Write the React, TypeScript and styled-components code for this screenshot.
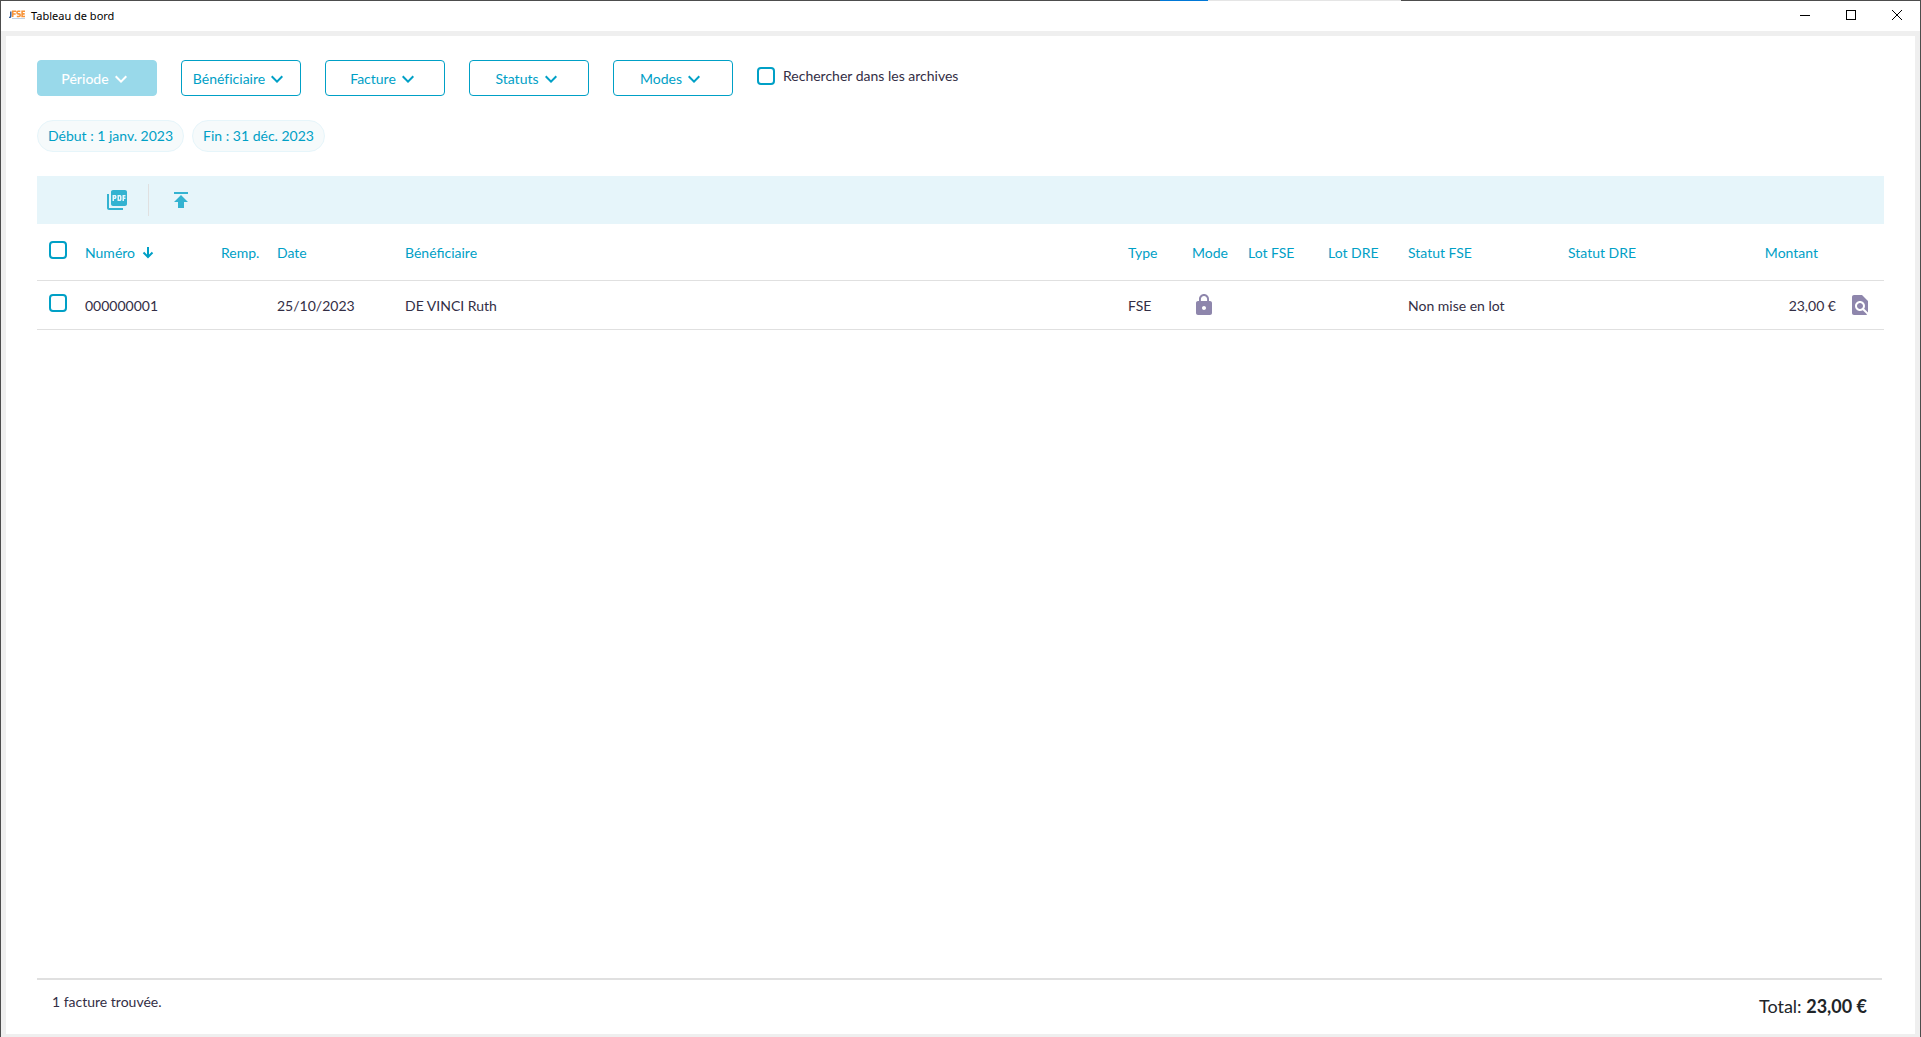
import React from "react";
import styled, { createGlobalStyle } from "styled-components";
import { MdFindInPage, MdKeyboardArrowDown, MdLock, MdPictureAsPdf, MdPublish } from "react-icons/md";

const color = {
  primary: "#00a0c6",
  primaryLight: "#99d9ea",
  icon: "#33b3d1",
  toolbar: "#e6f5fa",
  chip: "#f6fafb",
  text: "#332e45",
  purple: "#8e86ac",
  line: "#e0e0e0",
  frame: "#efefef",
  border: "#4d4d4d",
};

const GlobalStyle = createGlobalStyle`
  *, *::before, *::after { box-sizing: border-box; }
  body {
    margin: 0;
    background: #fff;
    color: ${color.text};
    font: 14px/20px Lato, "Liberation Sans", sans-serif;
  }
  button, input { font: inherit; margin: 0; }
`;

const Window = styled.div`
  display: flex;
  flex-direction: column;
  min-height: 100vh;
`;

const TopEdge = styled.div`
  display: flex;
  height: 1px;
`;

const EdgePart = styled.div<{ $share: number; $color: string }>`
  flex: ${(p) => p.$share};
  background: ${(p) => p.$color};
`;

const Shell = styled.div`
  flex: 1;
  display: flex;
  flex-direction: column;
  border: solid ${color.border};
  border-width: 0 1px;
`;

const TitleBar = styled.header`
  display: flex;
  align-items: center;
  height: 30px;
  padding: 0 0 2px 8px;
  background: #fff;
  color: #000;
`;

const Title = styled.h1`
  flex: 1;
  margin: 0 0 0 6px;
  padding-top: 2px;
  font: 400 11px/16px "Noto Sans", "Open Sans", sans-serif;
`;

const WindowButton = styled.button`
  display: flex;
  align-items: center;
  justify-content: center;
  width: 46px;
  height: 28px;
  padding: 0;
  border: 0;
  background: none;
  color: #000;
`;

const Frame = styled.div`
  flex: 1;
  display: flex;
  padding: 5px 5px 3px;
  background: ${color.frame};
`;

const Page = styled.main`
  flex: 1;
  display: flex;
  flex-direction: column;
  padding: 24px 31px 0;
  background: #fff;
`;

const Filters = styled.div`
  display: flex;
  gap: 24px;
`;

const FilterButton = styled.button<{ $active?: boolean }>`
  display: flex;
  align-items: center;
  justify-content: center;
  width: 120px;
  height: 36px;
  padding: 2px 0 0;
  border: 1px solid ${(p) => (p.$active ? color.primaryLight : color.primary)};
  border-radius: 4px;
  background: ${(p) => (p.$active ? color.primaryLight : "#fff")};
  color: ${(p) => (p.$active ? "#fff" : color.primary)};
  font-weight: ${(p) => (p.$active ? 500 : 400)};
  font-variant-ligatures: none;
`;

const ArchiveLabel = styled.label`
  display: flex;
  align-items: center;
  gap: 8px;
  height: 32px;
`;

const CheckBox = styled.input.attrs({ type: "checkbox" })`
  appearance: none;
  display: block;
  width: 18px;
  height: 18px;
  border: 2px solid ${color.primary};
  border-radius: 4px;
  background: #fff;
  &:checked { background: ${color.primary}; }
`;

const Chips = styled.div`
  display: flex;
  gap: 8px;
  margin: 24px 0;
`;

const Chip = styled.span`
  height: 32px;
  padding: 5px 10px;
  border: 1px solid ${color.toolbar};
  border-radius: 16px;
  background: ${color.chip};
  color: ${color.primary};
`;

const Toolbar = styled.div`
  display: flex;
  align-items: center;
  height: 48px;
  padding-left: 48px;
  background: ${color.toolbar};
`;

const ToolButton = styled.button`
  display: flex;
  align-items: center;
  justify-content: center;
  width: 64px;
  height: 32px;
  padding: 0;
  border: 0;
  background: none;
  color: ${color.icon};
  &:not(:last-child) { border-right: 1px solid ${color.line}; }
`;

const Table = styled.table`
  width: 100%;
  border-collapse: separate;
  border-spacing: 0;
  table-layout: fixed;
`;

const Col = styled.col<{ $width?: number }>`
  width: ${(p) => (p.$width ? `${p.$width}px` : "auto")};
`;

const HeadCell = styled.th<{ $right?: boolean }>`
  height: 57px;
  padding: 1px ${(p) => (p.$right ? 18 : 0)}px 0 0;
  border-bottom: 1px solid ${color.line};
  color: ${color.primary};
  font-weight: 400;
  text-align: ${(p) => (p.$right ? "right" : "left")};
  white-space: nowrap;
`;

const Cell = styled.td<{ $right?: boolean }>`
  height: 49px;
  padding: 1px 0 0;
  border-bottom: 1px solid ${color.line};
  text-align: ${(p) => (p.$right ? "right" : "left")};
  white-space: nowrap;
`;

const CheckSlot = styled.div`
  padding: 0 0 5px 12px;
`;

const SortLabel = styled.span`
  display: flex;
  align-items: center;
  gap: 7px;
`;

const IconSlot = styled.span`
  display: block;
  height: 24px;
  margin-bottom: 1px;
  color: ${color.purple};
`;

const IconButton = styled.button`
  display: block;
  width: 24px;
  height: 24px;
  margin: 0 12px 1px;
  padding: 0;
  border: 0;
  background: none;
  color: ${color.purple};
`;

const Footer = styled.footer`
  display: flex;
  justify-content: space-between;
  height: 56px;
  margin: auto 2px 0 0;
  padding: 12px 15px 0;
  border-top: 2px solid ${color.line};
`;

const Total = styled.span`
  padding-top: 2px;
  color: #212529;
  font-size: 18px;
  line-height: 24px;
`;

const Logo = () => (
  <svg width="16" height="10" viewBox="0 0 16 10" aria-hidden="true">
    <path d="M1.800 1.500v4.500c0 1-.6 1.500-1.700 1.400" fill="none" stroke="#2b5797" strokeWidth="1.400" />
    <path d="M3.700 7V1.200h3.500M3.700 4h3M11.300 1.300H9.100Q8 1.300 8 2.500T9.100 3.900h.9q1.200 0 1.200 1.300T10 6.500H7.800M16 1.200h-2.900v5.300H16M13 3.900h2.700" fill="none" stroke="#f7943a" strokeWidth="1.600" />
    <path d="M3 8.500h13" stroke="#c3d3e6" strokeWidth="1" />
  </svg>
);

const SortArrow = () => (
  <svg width="12" height="12" viewBox="0 0 12 12" fill="none" stroke="currentColor" strokeWidth="2" aria-hidden="true">
    <path d="M6 0v10M1.500 5.500 6 10l4.500-4.500" />
  </svg>
);

const filters = ["Période", "Bénéficiaire", "Facture", "Statuts", "Modes"];
const widths = [48, 136, 56, 128, undefined, 64, 56, 80, 80, 160, 160, 108, 48];
const headings = ["Remp.", "Date", "Bénéficiaire", "Type", "Mode", "Lot FSE", "Lot DRE", "Statut FSE", "Statut DRE"];

export default function App() {
  return (
    <>
      <GlobalStyle />
      <Window>
        <TopEdge>
          <EdgePart $share={1160} $color={color.border} />
          <EdgePart $share={48} $color="#0078d7" />
          <EdgePart $share={193} $color="#e5e5e5" />
          <EdgePart $share={520} $color={color.border} />
        </TopEdge>
        <Shell>
          <TitleBar>
            <Logo />
            <Title>Tableau de bord</Title>
            <WindowButton aria-label="Réduire">
              <svg width="10" height="10" shapeRendering="crispEdges"><path d="M0 5.500h10" stroke="currentColor" /></svg>
            </WindowButton>
            <WindowButton aria-label="Agrandir">
              <svg width="10" height="10" shapeRendering="crispEdges"><path d="M.5.5h9v9h-9z" fill="none" stroke="currentColor" /></svg>
            </WindowButton>
            <WindowButton aria-label="Fermer">
              <svg width="10" height="10"><path d="m0 0 10 10M10 0 0 10" stroke="currentColor" /></svg>
            </WindowButton>
          </TitleBar>
          <Frame>
            <Page>
              <Filters>
                {filters.map((name, i) => (
                  <FilterButton key={name} $active={i === 0}>
                    {name}
                    <MdKeyboardArrowDown size={24} />
                  </FilterButton>
                ))}
                <ArchiveLabel>
                  <CheckBox />
                  Rechercher dans les archives
                </ArchiveLabel>
              </Filters>
              <Chips>
                <Chip>Début : 1 janv. 2023</Chip>
                <Chip>Fin : 31 déc. 2023</Chip>
              </Chips>
              <Toolbar>
                <ToolButton aria-label="Exporter en PDF"><MdPictureAsPdf size={24} /></ToolButton>
                <ToolButton aria-label="Envoyer"><MdPublish size={24} /></ToolButton>
              </Toolbar>
              <Table>
                <colgroup>
                  {widths.map((w, i) => <Col key={i} $width={w} />)}
                </colgroup>
                <thead>
                  <tr>
                    <HeadCell><CheckSlot><CheckBox aria-label="Tout sélectionner" /></CheckSlot></HeadCell>
                    <HeadCell><SortLabel>Numéro<SortArrow /></SortLabel></HeadCell>
                    {headings.map((h) => <HeadCell key={h}>{h}</HeadCell>)}
                    <HeadCell $right>Montant</HeadCell>
                    <HeadCell />
                  </tr>
                </thead>
                <tbody>
                  <tr>
                    <Cell><CheckSlot><CheckBox aria-label="Sélectionner la facture 000000001" /></CheckSlot></Cell>
                    <Cell>000000001</Cell>
                    <Cell />
                    <Cell>25/10/2023</Cell>
                    <Cell>DE VINCI Ruth</Cell>
                    <Cell>FSE</Cell>
                    <Cell><IconSlot><MdLock size={24} /></IconSlot></Cell>
                    <Cell />
                    <Cell />
                    <Cell>Non mise en lot</Cell>
                    <Cell />
                    <Cell $right>23,00 €</Cell>
                    <Cell><IconButton aria-label="Voir la facture"><MdFindInPage size={24} /></IconButton></Cell>
                  </tr>
                </tbody>
              </Table>
              <Footer>
                <span>1 facture trouvée.</span>
                <Total>Total: <b>23,00 €</b></Total>
              </Footer>
            </Page>
          </Frame>
        </Shell>
      </Window>
    </>
  );
}
